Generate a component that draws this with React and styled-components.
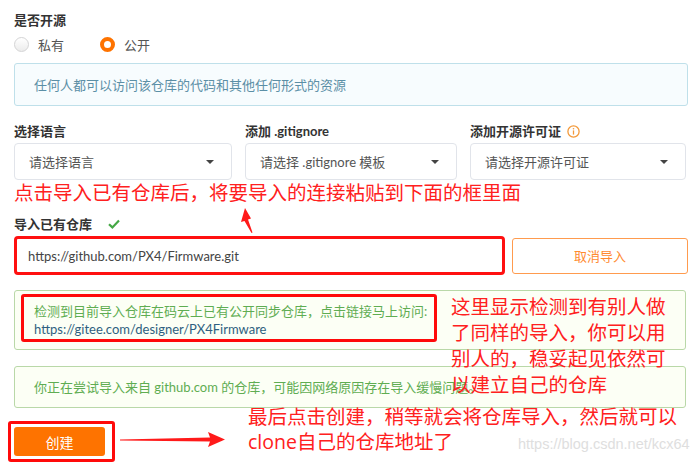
import React from "react";
import styled, { createGlobalStyle } from "styled-components";

const Global = createGlobalStyle`
  html, body { margin: 0; padding: 0; background: #fff; }
  body { font-family: "Lato", "Noto Sans CJK SC", sans-serif; }
  * { box-sizing: border-box; }
`;

const RED = "#ff2020";
const ORANGE = "#fe7300";

const Page = styled.div`
  position: relative;
  width: 700px;
  height: 462px;
  overflow: hidden;
  padding: 11px 0 0 14px;
  display: flex;
  flex-direction: column;
  align-items: flex-start;
`;

const Label = styled.div`
  font-size: 13px;
  line-height: 18px;
  font-weight: 700;
  color: #333;
  display: flex;
  align-items: center;
  gap: ${(p) => p.$gap || 0}px;
  white-space: nowrap;
`;

const RadioRow = styled.div`
  margin-top: 6px;
  height: 18px;
  display: flex;
  align-items: center;
`;

const RadioItem = styled.label`
  display: flex;
  align-items: center;
  gap: 9px;
  font-size: 13px;
  color: #555;
  margin-right: ${(p) => p.$mr || 0}px;
`;

const RadioDot = styled.span`
  width: 15px;
  height: 15px;
  border-radius: 50%;
  ${(p) =>
    p.$checked
      ? `border: 4px solid ${ORANGE}; background: #fff;`
      : `border: 1px solid #d4d4d5; background: linear-gradient(#fff, #ececec);`}
`;

const InfoBox = styled.div`
  margin-top: 10px;
  width: 674px;
  height: 43px;
  border: 1px solid #bfe0ea;
  border-radius: 3px;
  background: #f7fcfe;
  color: #5b8fa6;
  font-size: 13px;
  display: flex;
  align-items: center;
  padding: 0 19px;
`;

const SelectGrid = styled.div`
  margin-top: 16px;
  display: grid;
  grid-template-columns: 218px 212px 216px;
  column-gap: 13px;
`;

const Field = styled.div`
  display: flex;
  flex-direction: column;
  gap: 3px;
`;

const Select = styled.div`
  height: 37px;
  border: 1px solid #e1e4ea;
  border-radius: 4px;
  background: #fff;
  display: flex;
  align-items: center;
  justify-content: space-between;
  padding: 0 17px 0 14px;
  font-size: 13px;
  color: #555;
`;

const Caret = styled.span`
  width: 0;
  height: 0;
  border-left: 4px solid transparent;
  border-right: 4px solid transparent;
  border-top: 4px solid #444;
`;

const ImportSection = styled.div`
  margin-top: 35px;
  display: flex;
  flex-direction: column;
  gap: 3px;
`;

const ImportRow = styled.div`
  display: flex;
  align-items: center;
  gap: 7px;
`;

const UrlInput = styled.div`
  width: 491px;
  height: 39px;
  border: 3px solid #ff1010;
  border-radius: 4px;
  display: flex;
  align-items: center;
  padding-left: 11px;
  font-size: 13px;
  color: #444;
`;

const CancelButton = styled.button`
  width: 176px;
  height: 36px;
  border: 1px solid #ff9b4e;
  border-radius: 3px;
  background: #fff;
  color: #ff8a30;
  font-family: inherit;
  font-size: 13px;
`;

const Message = styled.div`
  position: relative;
  margin-top: ${(p) => p.$mt}px;
  width: 672px;
  height: ${(p) => p.$h}px;
  border: 1px solid #b9d8a8;
  border-radius: 3px;
  background: #fcfff5;
  color: #5fad52;
  font-size: 13px;
  line-height: 18px;
  display: flex;
  flex-direction: column;
  justify-content: center;
  padding: 0 19px;
`;

const Link = styled.span`
  color: #2f5f80;
`;

const Highlight = styled.div`
  position: absolute;
  left: ${(p) => p.$l}px;
  top: ${(p) => p.$t}px;
  width: ${(p) => p.$w}px;
  height: ${(p) => p.$h}px;
  border: 3px solid #ff0a0a;
  border-radius: 3px;
  pointer-events: none;
`;

const CreateWrap = styled.div`
  position: relative;
  margin-top: 19px;
`;

const CreateButton = styled.button`
  width: 91px;
  height: 29px;
  border: none;
  border-radius: 3px;
  background: ${ORANGE};
  color: #fff;
  font-family: inherit;
  font-size: 14px;
`;

const Note = styled.div`
  position: absolute;
  left: ${(p) => p.$l}px;
  top: ${(p) => p.$t}px;
  color: ${RED};
  font-family: "Open Sans", "Noto Sans CJK SC", sans-serif;
  font-size: 19.5px;
  line-height: ${(p) => p.$lh}px;
  white-space: nowrap;
`;

const Line = styled.div``;

const Overlay = styled.svg`
  position: absolute;
  left: 0;
  top: 0;
  pointer-events: none;
`;

const Watermark = styled.div`
  position: absolute;
  left: 518px;
  top: 435px;
  font-family: "Liberation Sans", sans-serif;
  font-size: 14.5px;
  line-height: 18px;
  color: #dedede;
  white-space: nowrap;
`;

const InfoIcon = () => (
  <svg width="13" height="13" viewBox="0 0 13 13">
    <circle cx="6.5" cy="6.5" r="5.6" fill="none" stroke="#f39a3c" strokeWidth="1.3" />
    <rect x="5.85" y="5.4" width="1.3" height="4.2" fill="#f39a3c" />
    <circle cx="6.5" cy="3.8" r="0.8" fill="#f39a3c" />
  </svg>
);

const CheckIcon = () => (
  <svg width="12" height="10" viewBox="0 0 12 10">
    <path d="M1 5.2 L4.4 8.4 L11 1.6" fill="none" stroke="#45a845" strokeWidth="2.2" />
  </svg>
);

export default function App() {
  return (
    <>
      <Global />
      <Page>
        <Label>是否开源</Label>
        <RadioRow>
          <RadioItem $mr={36}>
            <RadioDot />
            私有
          </RadioItem>
          <RadioItem>
            <RadioDot $checked />
            公开
          </RadioItem>
        </RadioRow>
        <InfoBox>任何人都可以访问该仓库的代码和其他任何形式的资源</InfoBox>

        <SelectGrid>
          <Field>
            <Label>选择语言</Label>
            <Select>
              请选择语言
              <Caret />
            </Select>
          </Field>
          <Field>
            <Label>添加 .gitignore</Label>
            <Select>
              请选择 .gitignore 模板
              <Caret />
            </Select>
          </Field>
          <Field>
            <Label $gap={6}>
              添加开源许可证 <InfoIcon />
            </Label>
            <Select>
              请选择开源许可证
              <Caret />
            </Select>
          </Field>
        </SelectGrid>

        <ImportSection>
          <Label $gap={16}>
            导入已有仓库 <CheckIcon />
          </Label>
          <ImportRow>
            <UrlInput>https://github.com/PX4/Firmware.git</UrlInput>
            <CancelButton>取消导入</CancelButton>
          </ImportRow>
        </ImportSection>

        <Message $mt={15} $h={60}>
          <div>检测到目前导入仓库在码云上已有公开同步仓库，点击链接马上访问:</div>
          <Link>https://gitee.com/designer/PX4Firmware</Link>
          <Highlight $l={6} $t={3} $w={416} $h={48} />
        </Message>

        <Message $mt={16} $h={42}>
          <div>你正在尝试导入来自 github.com 的仓库，可能因网络原因存在导入缓慢问题。</div>
        </Message>

        <CreateWrap>
          <CreateButton>创建</CreateButton>
          <Highlight $l={-6} $t={-6} $w={107} $h={41} />
        </CreateWrap>

        <Note $l={14} $t={180} $lh={26}>
          点击导入已有仓库后，将要导入的连接粘贴到下面的框里面
        </Note>
        <Note $l={451} $t={294} $lh={26}>
          <Line>这里显示检测到有别人做</Line>
          <Line>了同样的导入，你可以用</Line>
          <Line>别人的，稳妥起见依然可</Line>
          <Line>以建立自己的仓库</Line>
        </Note>
        <Note $l={248} $t={404} $lh={25}>
          <Line>最后点击创建，稍等就会将仓库导入，然后就可以</Line>
          <Line>clone自己的仓库地址了</Line>
        </Note>

        <Watermark>https://blog.csdn.net/kcx64</Watermark>

        <Overlay width="700" height="462" viewBox="0 0 700 462">
          <polygon points="245,208 241,222 244.5,221 251.5,233 252.5,232.5 248,219.5 251,218.5" fill="#ff1a1a" />
          <polygon points="120,439.5 210,437.5 208,432 225,439.5 208,447 210,441.5 120,440.5" fill="#ff1a1a" />
        </Overlay>
      </Page>
    </>
  );
}
